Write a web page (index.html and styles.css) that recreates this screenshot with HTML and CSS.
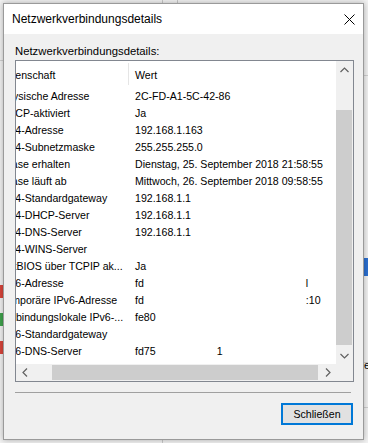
FILE: index.html
```html
<!DOCTYPE html>
<html lang="de">
<head>
    <meta charset="UTF-8">
    <meta name="viewport" content="width=device-width, initial-scale=1.0">
    <title>Netzwerkverbindungsdetails</title>
    <link rel="stylesheet" href="styles.css">
</head>
<body>
    <div class="desk">
        <!-- bits of the window behind the dialog -->
        <div class="behind vline v1"></div>
        <div class="behind vline v2"></div>
        <div class="behind vline v3"></div>
        <div class="behind hline h1"></div>
        <div class="behind hline h2"></div>
        <div class="behind hline h3"></div>
        <div class="behind hline h4"></div>
        <div class="behind blue-tab"></div>
        <div class="behind mark red m1"></div>
        <div class="behind mark green m2"></div>
        <div class="behind mark red m3"></div>
        <div class="behind peek">e</div>

        <div class="dialog">
            <div class="titlebar">
                <span class="title">Netzwerkverbindungsdetails</span>
                <svg class="close" width="11" height="11" viewBox="0 0 11 11">
                    <path d="M0.5 0.5 L10.5 10.5 M10.5 0.5 L0.5 10.5" stroke="#000" stroke-width="1" fill="none"/>
                </svg>
            </div>

            <div class="content">
                <div class="label">Netzwerkverbindungsdetails:</div>

                <div class="list">
                    <div class="view">
                        <div class="rows">
                            <div class="hdr">
                                <div class="prop">Eigenschaft</div>
                                <div class="val">Wert</div>
                            </div>
                            <div class="row"><div class="prop">Physische Adresse</div><div class="val">2C-FD-A1-5C-42-86</div></div>
                            <div class="row"><div class="prop">DHCP-aktiviert</div><div class="val">Ja</div></div>
                            <div class="row"><div class="prop">IPv4-Adresse</div><div class="val">192.168.1.163</div></div>
                            <div class="row"><div class="prop">IPv4-Subnetzmaske</div><div class="val">255.255.255.0</div></div>
                            <div class="row"><div class="prop">Lease erhalten</div><div class="val">Dienstag, 25. September 2018 21:58:55</div></div>
                            <div class="row"><div class="prop">Lease läuft ab</div><div class="val">Mittwoch, 26. September 2018 09:58:55</div></div>
                            <div class="row"><div class="prop">IPv4-Standardgateway</div><div class="val">192.168.1.1</div></div>
                            <div class="row"><div class="prop">IPv4-DHCP-Server</div><div class="val">192.168.1.1</div></div>
                            <div class="row"><div class="prop">IPv4-DNS-Server</div><div class="val">192.168.1.1</div></div>
                            <div class="row"><div class="prop">IPv4-WINS-Server</div><div class="val"></div></div>
                            <div class="row"><div class="prop">NetBIOS über TCPIP ak...</div><div class="val">Ja</div></div>
                            <div class="row"><div class="prop">IPv6-Adresse</div><div class="val">fd<span class="tail tail-a">l</span></div></div>
                            <div class="row"><div class="prop">Temporäre IPv6-Adresse</div><div class="val">fd<span class="tail tail-b">:10</span></div></div>
                            <div class="row"><div class="prop">Verbindungslokale IPv6-...</div><div class="val">fe80</div></div>
                            <div class="row"><div class="prop">IPv6-Standardgateway</div><div class="val"></div></div>
                            <div class="row"><div class="prop">IPv6-DNS-Server</div><div class="val">fd75<span class="tail tail-c">1</span></div></div>
                        </div>
                    </div>

                    <div class="vbar">
                        <div class="arrow">
                            <svg width="9" height="6" viewBox="0 0 9 6"><polyline points="0.5,5 4.5,1 8.5,5" stroke="#606060" stroke-width="1.2" fill="none"/></svg>
                        </div>
                        <div class="vtrack"><div class="vthumb"></div></div>
                        <div class="arrow">
                            <svg width="9" height="6" viewBox="0 0 9 6"><polyline points="0.5,1 4.5,5 8.5,1" stroke="#606060" stroke-width="1.2" fill="none"/></svg>
                        </div>
                    </div>

                    <div class="hbar">
                        <div class="arrow">
                            <svg width="6" height="9" viewBox="0 0 6 9"><polyline points="5,0.5 1,4.5 5,8.5" stroke="#606060" stroke-width="1.2" fill="none"/></svg>
                        </div>
                        <div class="htrack"><div class="hthumb"></div></div>
                        <div class="arrow">
                            <svg width="6" height="9" viewBox="0 0 6 9"><polyline points="1,0.5 5,4.5 1,8.5" stroke="#606060" stroke-width="1.2" fill="none"/></svg>
                        </div>
                    </div>

                    <div class="corner"></div>
                </div>

                <div class="sep"></div>

                <div class="actions">
                    <button class="btn">Schließen</button>
                </div>
            </div>
        </div>
    </div>
</body>
</html>
```

FILE: styles.css
```css
* {
    box-sizing: border-box;
}
body {
    margin: 0;
    font-family: "Liberation Sans", Arial, sans-serif;
    color: #000;
    background-color: #f0f0f0;
}
.desk {
    position: relative;
    width: 368px;
    height: 443px;
    overflow: hidden;
    padding: 3px 4px 0 3px;
    background-color: #f2f2f2;
}

/* window behind */
.behind {
    position: absolute;
}
.vline {
    width: 1px;
    background-color: #c8c8c8;
}
.v1 { left: 162px; top: 0; height: 3px; }
.v2 { left: 177px; top: 0; height: 3px; }
.v3 { left: 162px; top: 440px; height: 3px; }
.hline {
    height: 1px;
    background-color: #d0d0d0;
}
.h1 { left: 364px; width: 4px; top: 75px; }
.h2 { left: 364px; width: 4px; top: 362px; }
.h3 { left: 364px; width: 4px; top: 407px; }
.h4 { left: 0; width: 3px; top: 60px; }
.blue-tab {
    left: 364px;
    top: 258px;
    width: 4px;
    height: 18px;
    background-color: #2b6fd0;
}
.mark {
    left: 0;
    width: 3px;
    height: 13px;
}
.red { background-color: #d9453b; }
.green { background-color: #3fa34d; }
.m1 { top: 285px; }
.m2 { top: 313px; }
.m3 { top: 341px; }
.peek {
    left: 364px;
    top: 359px;
    font-size: 11px;
}

/* dialog */
.dialog {
    position: relative;
    width: 361px;
    height: 437px;
    border: 1px solid #9a9a9a;
    background-color: #f0f0f0;
    box-shadow: 0 0 6px rgba(0, 0, 0, 0.3);
}
.titlebar {
    display: flex;
    justify-content: space-between;
    align-items: center;
    height: 30px;
    padding-left: 8px;
    background-color: #fff;
}
.title {
    font-size: 12px;
}
.close {
    margin-right: 8px;
}
.content {
    padding: 10px 9px 0 11px;
}
.label {
    height: 14px;
    line-height: 14px;
    font-size: 11.3px;
    margin-bottom: 2px;
}

/* list view */
.list {
    display: grid;
    grid-template-columns: 1fr 17px;
    grid-template-rows: 1fr 17px;
    height: 322px;
    border: 1px solid #828790;
    background-color: #fff;
}
.view {
    overflow: hidden;
}
.rows {
    width: 600px;
    margin-left: -16px;
    font-size: 10.6px;
    white-space: nowrap;
}
.hdr {
    display: flex;
    height: 26px;
}
.hdr .prop {
    height: 22px;
    margin-top: 2px;
    line-height: 24px;
    border-right: 1px solid #e5e5e5;
}
.hdr .val {
    line-height: 28px;
}
.row {
    display: flex;
    height: 17px;
    line-height: 18px;
}
.prop {
    flex: none;
    width: 129px;
    overflow: hidden;
}
.val {
    padding-left: 6px;
}
.tail-a { margin-left: 162px; }
.tail-b { margin-left: 162px; }
.tail-c { margin-left: 61px; }

/* scrollbars */
.vbar {
    display: flex;
    flex-direction: column;
    background-color: #f0f0f0;
}
.hbar {
    display: flex;
    background-color: #f0f0f0;
}
.arrow {
    display: flex;
    justify-content: center;
    align-items: center;
    width: 17px;
    height: 17px;
    flex: none;
}
.vtrack {
    flex: 1;
    padding: 32px 1px 0 0;
}
.vthumb {
    height: 235px;
    background-color: #cdcdcd;
}
.htrack {
    flex: 1;
    padding: 1px 0 1px 19px;
}
.hthumb {
    width: 266px;
    height: 100%;
    background-color: #cdcdcd;
}
.corner {
    background-color: #f0f0f0;
}

.sep {
    height: 1px;
    margin: 10px 3px 0 0;
    background-color: #a0a0a0;
}
.actions {
    display: flex;
    justify-content: flex-end;
    margin-top: 10px;
    padding-right: 1px;
}
.btn {
    width: 72px;
    height: 22px;
    padding: 0;
    font-family: "Liberation Sans", Arial, sans-serif;
    font-size: 10.6px;
    color: #000;
    background-color: #e1e1e1;
    border: 2px solid #0078d7;
}
```
